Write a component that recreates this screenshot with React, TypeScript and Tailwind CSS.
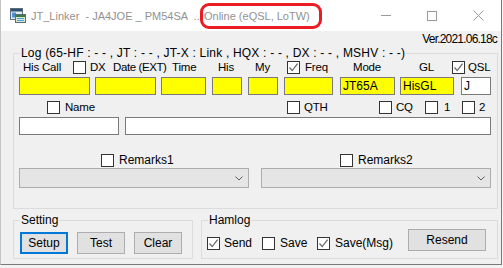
import type { ReactNode } from 'react';

function Check({ on = false }: { on?: boolean }) {
    return (
        <div className="w-[13px] h-[13px] shrink-0 border border-[#333333] bg-white flex items-center justify-center">
            {on && (
                <svg width="11" height="11" viewBox="0 0 11 11">
                    <path d="M1.5 5.5 L4.2 8.6 L9.6 1.6" fill="none" stroke="#6a6a6a" strokeWidth="1.3" />
                </svg>
            )}
        </div>
    );
}

function Combo() {
    return (
        <div className="w-[230px] h-[20px] shrink-0 bg-[#e5e5e5] border border-[#adadad] flex items-center justify-end pr-[5px]">
            <svg width="8" height="5" viewBox="0 0 8 5">
                <path d="M0.5 0.5 L4 4 L7.5 0.5" fill="none" stroke="#606060" strokeWidth="1" />
            </svg>
        </div>
    );
}

function Group({ title, className, legend = '', children }: { title: string; className: string; legend?: string; children: ReactNode }) {
    return (
        <fieldset className={`border border-[#dcdcdc] ${className}`}>
            <legend className={`ml-[6px] px-[1px] leading-[14px] whitespace-nowrap ${legend}`}>{title}</legend>
            {children}
        </fieldset>
    );
}

function AppIcon() {
    return (
        <svg width="16" height="15" viewBox="0 0 16 15">
            <rect x="0.5" y="0.5" width="12" height="11" fill="#e6ebf0" stroke="#5c6c7c" />
            <rect x="1" y="1" width="11" height="2.5" fill="#2f4f73" />
            <rect x="2" y="4.5" width="4" height="5" fill="#4b8fd6" />
            <rect x="5.5" y="6.5" width="10" height="8" fill="#d9e8d2" stroke="#5c6c7c" />
            <rect x="6" y="7" width="9" height="2" fill="#3c7a3c" />
            <path d="M7 10.5 H14 M7 12.5 H14" stroke="#4aa0d8" strokeWidth="1" />
        </svg>
    );
}

function TitleBar() {
    return (
        <div className="h-[31px] shrink-0 bg-white flex items-center text-[11px] text-[#929292]">
            <div className="ml-[9px] w-[21px] shrink-0 flex items-center">
                <AppIcon />
            </div>
            <div className="w-[169px] shrink-0 whitespace-pre">JT_Linker  - JA4JOE _ PM54SA  ...</div>
            <div className="w-[122px] h-[26px] shrink-0 border-[3px] border-[#ea1c24] rounded-[9px] flex items-center pl-[1px] whitespace-nowrap">
                Online (eQSL, LoTW)
            </div>
            <div className="flex-1" />
            <div className="w-[46px] h-full flex items-center justify-center">
                <div className="w-[10px] h-px bg-[#9a9a9a]" />
            </div>
            <div className="w-[46px] h-full flex items-center justify-center">
                <div className="w-[10px] h-[10px] border border-[#9a9a9a]" />
            </div>
            <div className="w-[46px] h-full flex items-center justify-center">
                <svg width="11" height="11" viewBox="0 0 11 11">
                    <path d="M0.5 0.5 L10.5 10.5 M10.5 0.5 L0.5 10.5" stroke="#9a9a9a" strokeWidth="1" />
                </svg>
            </div>
        </div>
    );
}

export default function App() {
    return (
        <div className="w-[503px] h-[268px] bg-[#f3f3f3] overflow-hidden font-['Liberation_Sans',Arial,sans-serif] text-[12px] leading-[14px] text-black">
            <div className="w-[502px] h-[265px] flex flex-col border-x border-b border-l-[#c4c4c4] border-r-[#7a7a7a] border-b-[#7a7a7a]">
                <TitleBar />
                <div className="flex-1 bg-[#f0f0f0] flex flex-col">
                    <div className="mt-[2px] h-[13px] leading-[13px] pr-[4px] text-right tracking-[-0.8px]">Ver.2021.06.18c</div>

                    <Group
                        title="Log (65-HF : - - , JT : - - , JT-X : Link , HQX : - - , DX : - - , MSHV : - -)"
                        legend="tracking-[0.2px]"
                        className="ml-[12px] w-[485px] pb-[20px]"
                    >
                        {/* labels */}
                        <div className="mt-[1px] h-[13px] leading-[13px] flex items-center whitespace-nowrap text-[11.5px] tracking-[-0.2px]">
                            <span className="ml-[9px] w-[50px] shrink-0">His Call</span>
                            <div className="w-[17px] shrink-0"><Check /></div>
                            <span className="w-[23px] shrink-0">DX</span>
                            <span className="w-[59px] shrink-0 tracking-[-0.4px]">Date (EXT)</span>
                            <span className="w-[46px] shrink-0">Time</span>
                            <span className="w-[37px] shrink-0">His</span>
                            <span className="w-[32px] shrink-0">My</span>
                            <div className="w-[18px] shrink-0"><Check on /></div>
                            <span className="w-[48px] shrink-0">Freq</span>
                            <span className="w-[66px] shrink-0">Mode</span>
                            <span className="w-[33px] shrink-0">GL</span>
                            <div className="w-[16px] shrink-0"><Check on /></div>
                            <span>QSL</span>
                        </div>

                        {/* yellow fields */}
                        <div className="mt-[3px] h-[18px] flex">
                            <div className="ml-[5px] w-[71px] shrink-0 border border-[#7a7a7a] bg-[#ffff00]" />
                            <div className="ml-[5px] w-[61px] shrink-0 border border-[#7a7a7a] bg-[#ffff00]" />
                            <div className="ml-[5px] w-[45px] shrink-0 border border-[#7a7a7a] bg-[#ffff00]" />
                            <div className="ml-[6px] w-[30px] shrink-0 border border-[#7a7a7a] bg-[#ffff00]" />
                            <div className="ml-[6px] w-[30px] shrink-0 border border-[#7a7a7a] bg-[#ffff00]" />
                            <div className="ml-[6px] w-[49px] shrink-0 border border-[#7a7a7a] bg-[#ffff00]" />
                            <div className="ml-[7px] w-[55px] shrink-0 border border-[#7a7a7a] bg-[#ffff00] pl-[2px] leading-[16px]">JT65A</div>
                            <div className="ml-[5px] w-[54px] shrink-0 border border-[#7a7a7a] bg-[#ffff00] pl-[2px] leading-[16px]">HisGL</div>
                            <div className="ml-[7px] w-[30px] shrink-0 border border-[#7a7a7a] bg-white pl-[2px] leading-[16px]">J</div>
                        </div>

                        {/* second checkbox row */}
                        <div className="mt-[6px] h-[13px] leading-[13px] flex items-center whitespace-nowrap text-[11.5px] tracking-[-0.2px]">
                            <div className="ml-[33px] w-[18px] shrink-0"><Check /></div>
                            <span className="w-[222px] shrink-0">Name</span>
                            <div className="w-[17px] shrink-0"><Check /></div>
                            <span className="w-[75px] shrink-0">QTH</span>
                            <div className="w-[17px] shrink-0"><Check /></div>
                            <span className="w-[29px] shrink-0">CQ</span>
                            <div className="w-[19px] shrink-0"><Check /></div>
                            <span className="w-[18px] shrink-0">1</span>
                            <div className="w-[17px] shrink-0"><Check /></div>
                            <span>2</span>
                        </div>

                        <div className="mt-[3px] h-[18px] flex">
                            <div className="ml-[5px] w-[100px] shrink-0 border border-[#7a7a7a] bg-white" />
                            <div className="ml-[6px] w-[366px] shrink-0 border border-[#7a7a7a] bg-white" />
                        </div>

                        <div className="mt-[19px] h-[13px] leading-[13px] flex items-center whitespace-nowrap">
                            <div className="ml-[87px] w-[18px] shrink-0"><Check /></div>
                            <span className="w-[221px] shrink-0">Remarks1</span>
                            <div className="w-[18px] shrink-0"><Check /></div>
                            <span>Remarks2</span>
                        </div>

                        <div className="mt-[1px] flex">
                            <div className="ml-[5px]"><Combo /></div>
                            <div className="ml-[12px]"><Combo /></div>
                        </div>
                    </Group>

                    <div className="mt-[4px] ml-[12px] flex gap-[8px]">
                        <Group title="Setting" className="w-[180px] pb-[4px]">
                            <div className="mt-[5px] flex">
                                <button className="ml-[6px] w-[48px] h-[22px] bg-[#e1e1e1] border-2 border-[#0078d7] text-center">Setup</button>
                                <button className="ml-[9px] w-[48px] h-[22px] bg-[#e1e1e1] border border-[#adadad] text-center">Test</button>
                                <button className="ml-[9px] w-[48px] h-[22px] bg-[#e1e1e1] border border-[#adadad] text-center">Clear</button>
                            </div>
                        </Group>
                        <Group title="Hamlog" className="w-[297px] pb-[4px]">
                            <div className="flex items-start h-[27px]">
                                <div className="mt-[10px] ml-[5px] h-[13px] flex items-center whitespace-nowrap leading-[13px]">
                                    <div className="w-[17px] shrink-0"><Check on /></div>
                                    <span className="w-[38px] shrink-0">Send</span>
                                    <div className="w-[18px] shrink-0"><Check /></div>
                                    <span className="w-[37px] shrink-0">Save</span>
                                    <div className="w-[18px] shrink-0"><Check on /></div>
                                    <span className="w-[73px] shrink-0">Save(Msg)</span>
                                </div>
                                <button className="mt-[2px] w-[78px] h-[22px] bg-[#e1e1e1] border border-[#adadad] text-center">Resend</button>
                            </div>
                        </Group>
                    </div>
                </div>
            </div>
        </div>
    );
}
